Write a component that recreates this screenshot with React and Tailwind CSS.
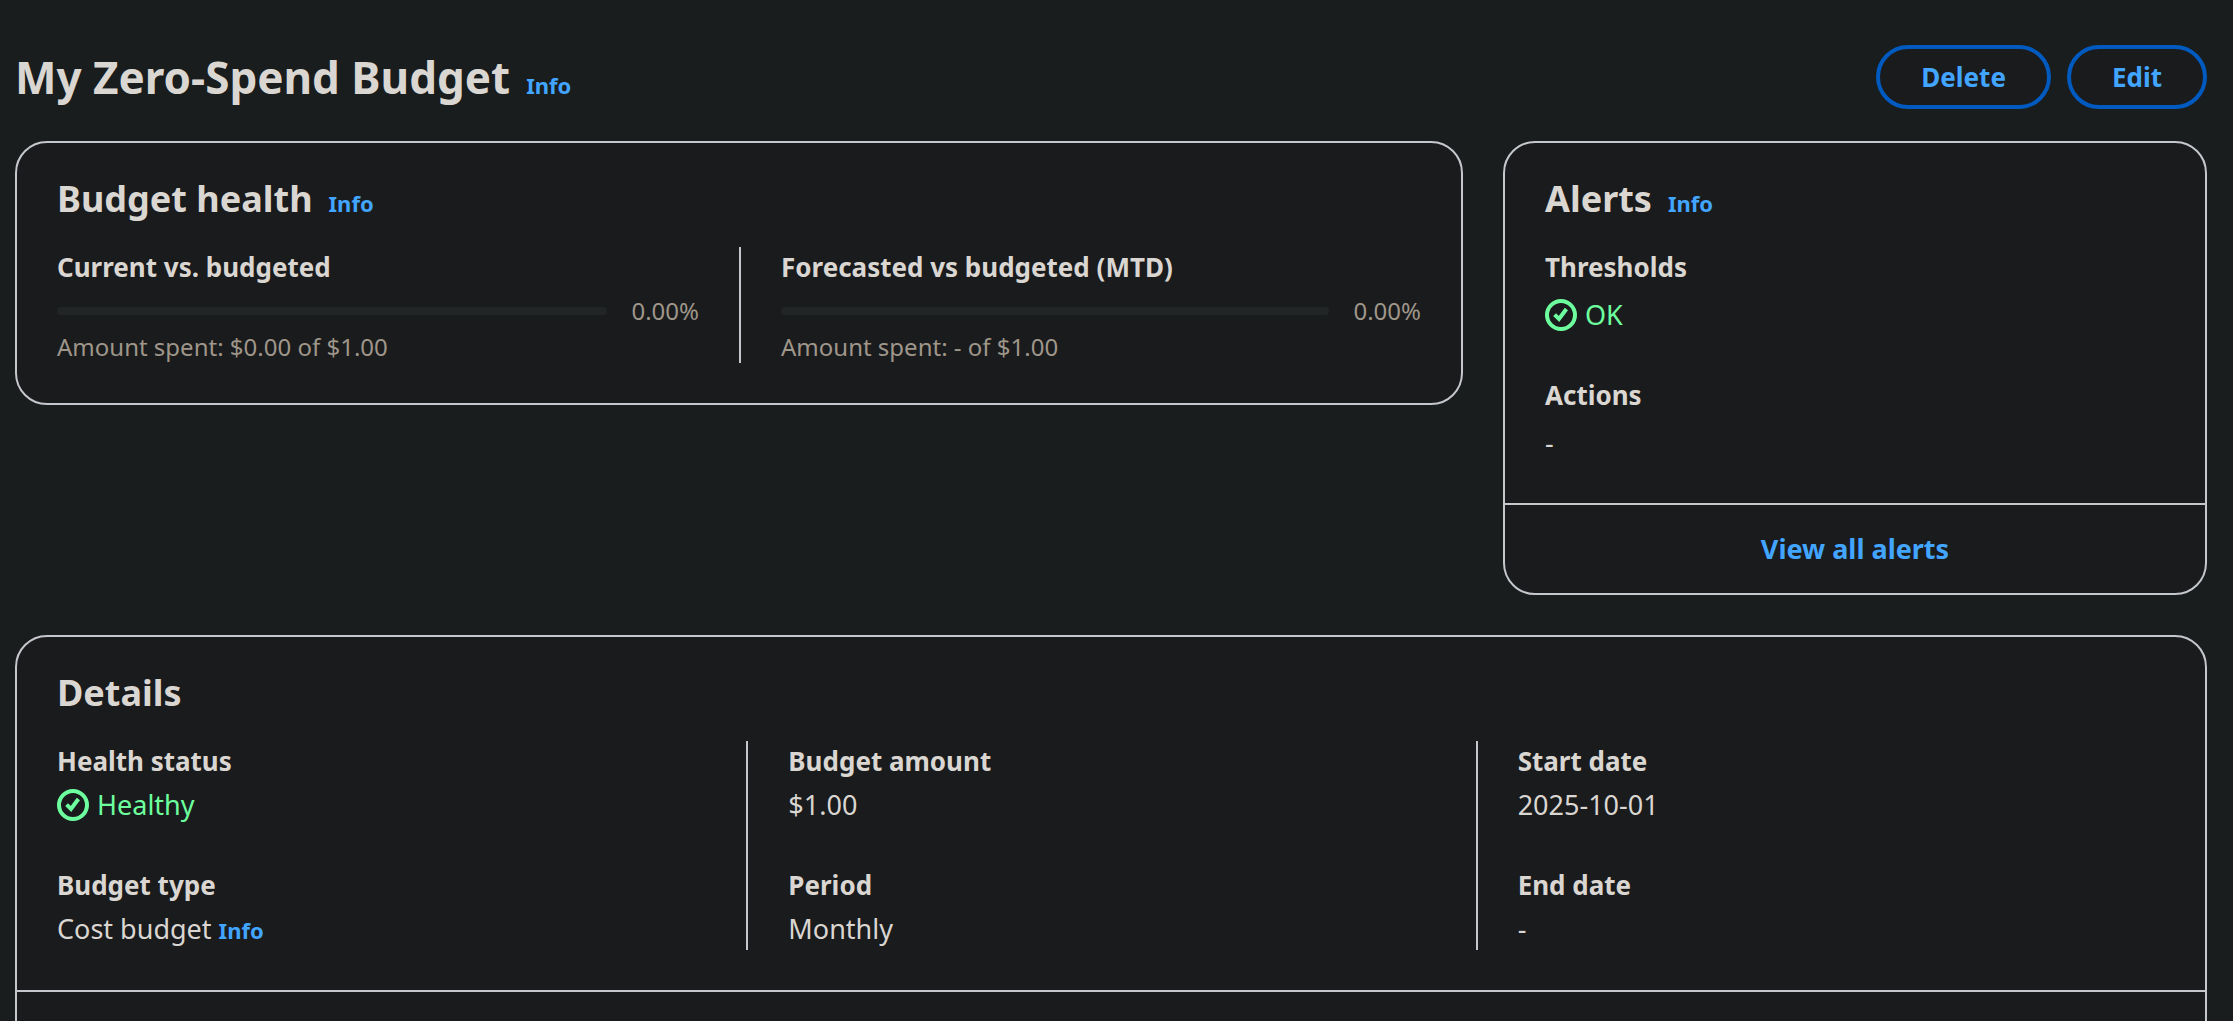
function InfoLink({ topic }) {
  return (
    <a href="#info" aria-label={`Info about ${topic}`} className="text-[22px] font-bold text-[#42a5ff]">
      Info
    </a>
  );
}

function SectionHeading({ children, info }) {
  return (
    <div className="flex items-baseline gap-4 px-10">
      <h2 className="text-[36px] leading-[48px] font-bold">{children}</h2>
      {info && <InfoLink topic={children} />}
    </div>
  );
}

function StatusOk({ children }) {
  return (
    <span className="flex items-center gap-2 text-[#6dff9e]">
      <svg
        viewBox="0 0 16 16"
        className="size-8 shrink-0"
        fill="none"
        stroke="currentColor"
        strokeWidth="2"
        aria-hidden="true"
      >
        <circle cx="8" cy="8" r="7" />
        <path d="m4.8 7.8 2.2 2.2 3.7-5" />
      </svg>
      {children}
    </span>
  );
}

function Field({ label, children, className = "gap-1" }) {
  return (
    <div className={`flex flex-col ${className}`}>
      <dt className="text-[26px] leading-[40px] font-bold">{label}</dt>
      <dd className="text-[27px] leading-[40px]">{children}</dd>
    </div>
  );
}

function Meter({ label, percent, caption, className = "" }) {
  return (
    <div className={`px-10 ${className}`}>
      <h3 className="text-[26px] leading-[40px] font-bold">{label}</h3>
      <div className="mt-1 flex h-10 items-center gap-6 text-2xl text-[#9f968a]">
        <div
          role="progressbar"
          aria-label={label}
          aria-valuenow={percent}
          aria-valuemin={0}
          aria-valuemax={100}
          className="h-2 flex-1 overflow-hidden rounded bg-[#222526]"
        >
          <div className="h-full bg-[#42a5ff]" style={{ width: `${percent}%` }} />
        </div>
        <span>{percent.toFixed(2)}%</span>
      </div>
      <p className="text-2xl text-[#9f968a]">{caption}</p>
    </div>
  );
}

const card = "rounded-[32px] border-2 border-[#c6c6cd] bg-[#1a1b1d]";
const separated = "border-l-2 border-[#c6c6cd]";
const fieldColumn = "flex flex-col gap-10 px-10";
const button =
  "h-16 rounded-full border-4 border-[#005abf] bg-[#1a1b1d] px-[41px] text-[26px] font-bold text-[#42a5ff]";

export default function App() {
  return (
    <main className="h-screen overflow-hidden bg-[#191d1d] pt-[45px] pr-[26px] pl-[15px] font-['Noto_Sans','Open_Sans',sans-serif] text-[#dad6d1]">
      <header className="flex h-16 items-center justify-between">
        <div className="flex items-baseline gap-4">
          <h1 className="text-[44px] leading-[60px] font-bold">My Zero-Spend Budget</h1>
          <InfoLink topic="this budget" />
        </div>
        <div className="flex gap-4">
          <button type="button" className={button}>Delete</button>
          <button type="button" className={button}>Edit</button>
        </div>
      </header>

      <div className="mt-8 grid grid-cols-12 items-start gap-10">
        <section className={`col-span-8 pt-8 pb-10 ${card}`}>
          <SectionHeading info>Budget health</SectionHeading>
          <div className="mt-6 grid grid-cols-2">
            <Meter label="Current vs. budgeted" percent={0} caption="Amount spent: $0.00 of $1.00" />
            <Meter
              label="Forecasted vs budgeted (MTD)"
              percent={0}
              caption="Amount spent: - of $1.00"
              className={separated}
            />
          </div>
        </section>

        <section className={`col-span-4 pt-8 ${card}`}>
          <SectionHeading info>Alerts</SectionHeading>
          <dl className="mt-6 mb-10 flex flex-col gap-10 px-10">
            <Field label="Thresholds" className="gap-2">
              <StatusOk>OK</StatusOk>
            </Field>
            <Field label="Actions" className="gap-2">-</Field>
          </dl>
          <div className="flex h-[90px] items-center justify-center border-t-2 border-[#c6c6cd]">
            <a href="#alerts" className="text-[27px] font-bold text-[#42a5ff]">
              View all alerts
            </a>
          </div>
        </section>
      </div>

      <section className={`mt-10 pt-8 ${card}`}>
        <SectionHeading>Details</SectionHeading>
        <div className="mt-6 grid grid-cols-3">
          <dl className={fieldColumn}>
            <Field label="Health status">
              <StatusOk>Healthy</StatusOk>
            </Field>
            <Field label="Budget type">
              Cost budget <InfoLink topic="budget type" />
            </Field>
          </dl>
          <dl className={`${fieldColumn} ${separated}`}>
            <Field label="Budget amount">$1.00</Field>
            <Field label="Period">Monthly</Field>
          </dl>
          <dl className={`${fieldColumn} ${separated}`}>
            <Field label="Start date">2025-10-01</Field>
            <Field label="End date">-</Field>
          </dl>
        </div>
        <div className="mt-10 h-24 border-t-2 border-[#c6c6cd]" />
      </section>
    </main>
  );
}
